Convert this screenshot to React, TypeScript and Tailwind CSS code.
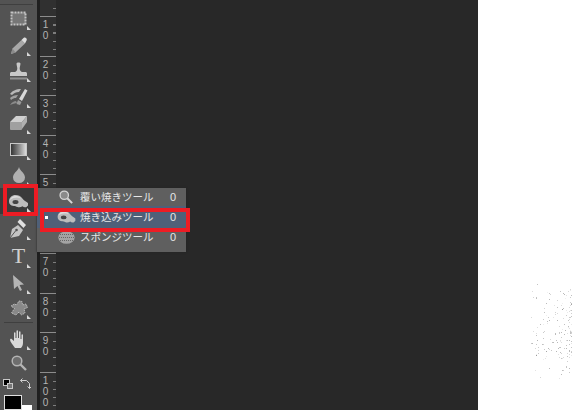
const MARKS = ['1', '2', '3', '4', '5', '6', '7', '8', '9', '10'];

function Corner() {
  return <span className="absolute right-[6px] bottom-[2px] h-0 w-0 border-t-[4px] border-l-[4px] border-t-transparent border-l-[#d8d8d8]" />;
}

function Tool({ h, corner, className = '', children }: { h: number; corner?: boolean; className?: string; children: React.ReactNode }) {
  return (
    <div className={`relative flex w-full shrink-0 items-center justify-center ${className}`} style={{ height: h }}>
      {children}
      {corner && <Corner />}
    </div>
  );
}

function Chip() {
  return (
    <svg width="17" height="15" viewBox="0 0 17 15">
      <rect x="1.500" y="1.500" width="14" height="12" fill="#767676" stroke="#c4c4c4" strokeWidth="2" strokeDasharray="2 1" />
    </svg>
  );
}
function Pencil() {
  return (
    <svg width="16" height="17" viewBox="0 0 16 17">
      <path d="M0 17l1.500-5.500L10.500 3l3.500 3.500L4.500 15.500z" fill="#a8a8a8" />
      <path d="M0 17l1.500-5.500 3 4z" fill="#8a8a8a" />
      <path d="M10.500 3L12.500 1c1-.8 2-.6 2.800.2.700.8.700 1.800 0 2.800L14 6.500z" fill="#dedede" />
    </svg>
  );
}
function Stamp() {
  return (
    <svg width="17" height="18" viewBox="0 0 17 18">
      <path d="M6.500 1.500c0-1.500 4-1.500 4 0 0 2-.8 3-.8 5 0 2 1 3 2.300 3.500h3.500c.8 0 1.500.7 1.500 1.500V14H0v-2.500C0 10.700.7 10 1.500 10H5c1.300-.5 2.300-1.500 2.300-3.500 0-2-.8-3-.8-5z" fill="#c8c8c8" />
      <rect x="0" y="15.500" width="17" height="2" fill="#909090" />
    </svg>
  );
}
function Brush() {
  return (
    <svg width="18" height="18" viewBox="0 0 18 18">
      <path d="M0 6c2-3 6-5 11-5L9 4C6 4 4 5 2 7z" fill="#b8b8b8" />
      <path d="M0 10c2-2 5-3 8-3L6 10c-2 0-3 .5-5 2z" fill="#a0a0a0" />
      <path d="M0 17c2-3 4-4 6-4l1 2c-2 0-4 1-7 2z" fill="#8a8a8a" />
      <path d="M9 11l6-10 2.500 1.500L12 13z" fill="#d8d8d8" />
      <path d="M8 12l3.500 2-1.500 3-3.500-1z" fill="#9a9a9a" />
    </svg>
  );
}
function Eraser() {
  return (
    <svg width="17" height="14" viewBox="0 0 17 14">
      <path d="M6 0h11l-5 6H0z" fill="#d0d0d0" />
      <path d="M0 6h12v7a1 1 0 0 1-1 1H1a1 1 0 0 1-1-1z" fill="#a0a0a0" />
      <path d="M12 6l5-6v6l-5 7z" fill="#b0b0b0" />
    </svg>
  );
}
function Gradient() {
  return <div className="h-[13px] w-[17px] border border-[#c8c8c8] bg-gradient-to-r from-[#363636] to-[#dcdcdc]" />;
}
function Drop() {
  return (
    <svg width="12" height="16" viewBox="0 0 12 16">
      <path d="M6 0c1 4 6 6 6 10.500a6 5.500 0 0 1-12 0C0 6 5 4 6 0z" fill="#b0b0b0" />
    </svg>
  );
}
function Burn({ w = 19, h = 15 }: { w?: number; h?: number }) {
  return (
    <svg width={w} height={h} viewBox="0 0 19 15">
      <path d="M0 7.500C0 3.500 3 1 6.500 1c3 0 5 1 6.500 3 1.500 2 3.500 3.500 6 5v2.500l-1.500 1.500c-1.500.7-3 .2-4-.8-1.500 1-3.500 1.500-5 .8-1.500-.5-2.500-1-4-1C1.500 11.500 0 10 0 7.500z" fill="#bcbcbc" />
      <path d="M1 6c1-3 3-4 5.500-4 2 0 4 .5 5.500 2.500-3-1.500-7-1.500-11 1.500z" fill="#dcdcdc" />
      <ellipse cx="6.500" cy="8" rx="3" ry="2" fill="#454545" />
    </svg>
  );
}
function Pen() {
  return (
    <svg width="17" height="20" viewBox="0 0 17 20">
      <path d="M0 20l2-9 6-4 5 5-4 6z" fill="#c4c4c4" />
      <path d="M10 1l6 6-2.500 3-6-6z" fill="#e0e0e0" />
      <path d="M0 20l5.500-7" stroke="#535353" />
      <circle cx="6.500" cy="12" r="1.300" fill="#535353" />
    </svg>
  );
}
function Arrow() {
  return (
    <svg width="11" height="16" viewBox="0 0 11 16">
      <path d="M0 0l11 9.500-4.500.5 2.500 5-2 1-2.500-5L1 14z" fill="#b4b4b4" />
    </svg>
  );
}
function Puzzle() {
  return (
    <svg width="18" height="17" viewBox="0 0 18 17">
      <path d="M9 1l3 .5.500 3.500 3.500-1 1.500 3.500-3.500 1.500 1 4-3.500 2-2.500-3-3 3-4.500-2 3-4.500L1 6l3.500-2 2 1z" fill="#888888" stroke="#bcbcbc" strokeDasharray="1.500 .8" />
    </svg>
  );
}
function Hand() {
  return (
    <svg width="17" height="18" viewBox="0 0 17 18">
      <path d="M5 18C3 15 0 12 0 9.500l1-1 3 2.500V3c0-1 1.500-1 1.500 0v5h1V1c0-1 1.500-1 1.500 0v7h1V2c0-1 1.500-1 1.500 0v7h1V5c0-1 1.500-1 1.500 0v8c0 2-1 4-2 5z" fill="#d8d8d8" />
    </svg>
  );
}
function Zoom({ size = 16, fill = '#6e6e6e', stroke = '#b4b4b4' }: { size?: number; fill?: string; stroke?: string }) {
  return (
    <svg width={size} height={size} viewBox="0 0 16 16">
      <circle cx="6" cy="6" r="4.800" fill={fill} stroke={stroke} strokeWidth="1.500" />
      <path d="M9.500 9.500L15 15" stroke={stroke} strokeWidth="2.400" />
    </svg>
  );
}
function Sponge() {
  return (
    <svg width="17" height="13" viewBox="0 0 17 13">
      <ellipse cx="8.500" cy="6.500" rx="8.200" ry="6.300" fill="#a4a4a4" />
      <path d="M2 3.500h13M1 6.500h15M2 9.500h13" stroke="#666666" strokeDasharray="1 1" />
    </svg>
  );
}

function Toolbar() {
  return (
    <div className="flex w-[37px] shrink-0 flex-col items-center bg-[#535353]">
      <div className="mt-[4px] h-px w-[33px] self-start bg-[#3f3f3f]" />
      <Tool h={27} corner><Chip /></Tool>
      <Tool h={26} corner><Pencil /></Tool>
      <Tool h={26} corner><Stamp /></Tool>
      <Tool h={26} corner><Brush /></Tool>
      <Tool h={26} corner><Eraser /></Tool>
      <Tool h={26} corner><Gradient /></Tool>
      <Tool h={26} corner><Drop /></Tool>
      <Tool h={26} corner className="bg-[#3a3a3a]"><Burn /></Tool>
      <Tool h={28} corner><Pen /></Tool>
      <Tool h={28} corner><span className="font-['Liberation_Serif',serif] text-[22px] leading-none text-[#d0d0d0]">T</span></Tool>
      <Tool h={26} corner><Arrow /></Tool>
      <Tool h={25} corner><Puzzle /></Tool>
      <div className="mt-[1px] h-px w-[29px] bg-[#3f3f3f]" />
      <Tool h={26} corner className="mt-[3px]"><Hand /></Tool>
      <Tool h={22}><Zoom /></Tool>
      <div className="flex h-[19px] w-full shrink-0 items-center justify-between pr-[6px] pl-[3px]">
        <span className="relative h-[10px] w-[10px]">
          <span className="absolute top-0 left-0 h-[7px] w-[7px] border border-[#c8c8c8] bg-black" />
          <span className="absolute right-0 bottom-0 h-[6px] w-[6px] border border-[#c8c8c8] bg-[#777777]" />
        </span>
        <svg width="11" height="11" viewBox="0 0 11 11">
          <path d="M0.500 2.500h6l3 3v5M0.500 2.500l2-2M0.500 2.500l2 2M9.500 10.500l-2-2M9.500 10.500l2-2" stroke="#d0d0d0" fill="none" />
        </svg>
      </div>
      <div className="relative h-[17px] w-full shrink-0">
        <div className="absolute top-[2px] left-[4px] h-[15px] w-[18px] border border-[#e0e0e0] bg-black" />
        <div className="absolute bottom-0 left-[22px] h-[5px] w-[10px] bg-white" />
      </div>
    </div>
  );
}

function Ticks() {
  return (
    <svg width="4" height="40" viewBox="0 0 4 40" className="absolute top-0 right-0">
      {[8, 16, 24, 32].map((y) => (
        <rect key={y} x="1" y={y} width="3" height="1" fill="#7d7d7d" />
      ))}
    </svg>
  );
}

function Ruler() {
  return (
    <div className="flex w-[16px] shrink-0 flex-col overflow-hidden bg-[#303030]">
      <div className="relative h-[16px] shrink-0"><Ticks /></div>
      {MARKS.map((m) => (
        <div key={m} className="relative h-[39.5px] shrink-0 border-t border-[#8c8c8c]">
          <Ticks />
          <div className="flex w-[11px] flex-col items-center pt-[2px] font-['Liberation_Sans',sans-serif] text-[10px] leading-[11px] text-[#b4b4b4]">
            {m.split('').concat('0').map((c, i) => (
              <span key={i}>{c}</span>
            ))}
          </div>
        </div>
      ))}
    </div>
  );
}

// loose scatter of pale pixels, denser towards the right edge
const rand = (n: number) => {
  const s = Math.sin(n * 12.9898) * 43758.5453;
  return s - Math.floor(s);
};
const SPECKS = Array.from({ length: 170 }, (_, i) => ({
  x: 93 - Math.pow(rand(i + 1), 1.8) * 40,
  y: 327 + (rand(i + 101) + rand(i + 201) - 1) * 58,
  o: 0.1 + rand(i + 301) * 0.45,
}));

function Flyout() {
  const rows = [
    { label: '覆い焼きツール', icon: <Zoom size={14} fill="#8a8a8a" stroke="#d4d4d4" />, h: 'h-[18px]' },
    { label: '焼き込みツール', icon: <Burn w={19} h={14} />, h: 'h-[22px] bg-[#4f6078]', active: true },
    { label: 'スポンジツール', icon: <Sponge />, h: 'h-[18px]' },
  ];
  return (
    <div className="absolute top-[188px] left-[37px] flex h-[64px] w-[149px] flex-col bg-[#5f5f5f] font-['Noto_Sans_CJK_JP',sans-serif] text-[10.5px] text-[#e6e6e6] shadow-[0_0_2px_#222]">
      {rows.map((r) => (
        <div key={r.label} className={`flex items-center ${r.h}`}>
          <span className="flex w-[11px] justify-end">
            {r.active && <span className="h-[3px] w-[3px] bg-white" />}
          </span>
          <span className="ml-[8px] flex w-[20px] justify-center">{r.icon}</span>
          <span className="ml-[4px] flex-1 leading-none">{r.label}</span>
          <span className="mr-[10px] font-['Liberation_Sans',sans-serif] text-[11px]">0</span>
        </div>
      ))}
    </div>
  );
}

export default function App() {
  return (
    <div className="relative flex h-[410px] w-[572px] overflow-hidden bg-[#282828]">
      <Toolbar />
      <div className="w-[3px] shrink-0 bg-[#1f1f1f]" />
      <Ruler />
      <div className="flex-1" />
      <div className="relative w-[94px] shrink-0 bg-white">
        <svg width="94" height="410" className="absolute top-0 left-0">
          {SPECKS.map((s, i) => (
            <rect key={i} x={Math.round(s.x)} y={Math.round(s.y)} width="1" height="1" fill="#777777" opacity={s.o} />
          ))}
        </svg>
      </div>
      <Flyout />
      <div className="absolute top-[184px] left-[3px] h-[32px] w-[35px] border-[4px] border-[#ed1c24]" />
      <div className="absolute top-[208px] left-[40px] h-[24px] w-[150px] border-[4px] border-[#ed1c24]" />
    </div>
  );
}
